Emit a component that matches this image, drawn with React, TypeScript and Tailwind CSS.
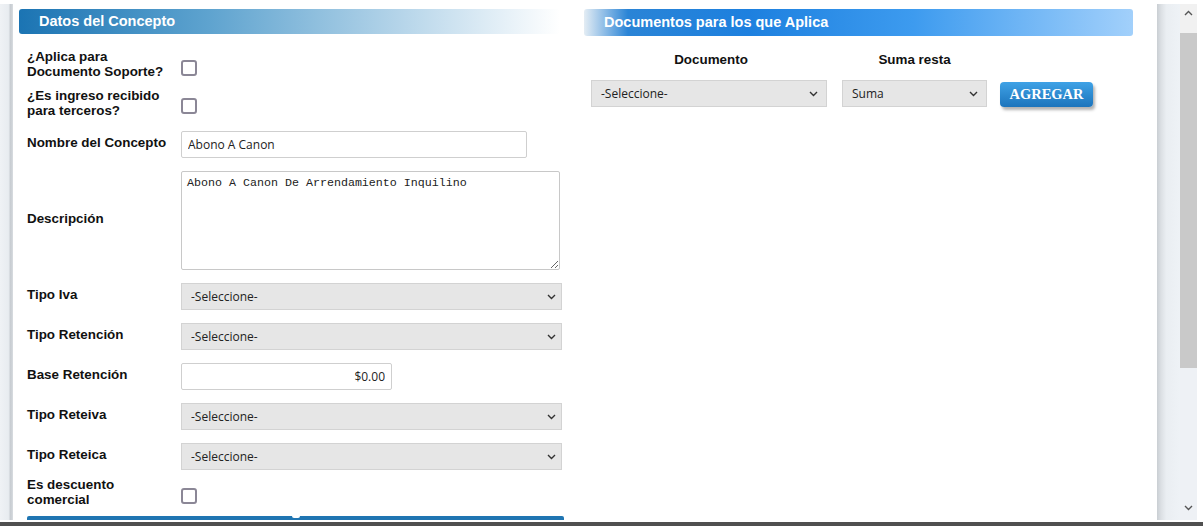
import React from "react";

const sans = "font-['Liberation_Sans',Arial,sans-serif]";
const ui = "font-['Open_Sans',Arial,sans-serif]";

function Chevron({ className = "" }: { className?: string }) {
  return (
    <svg width="9" height="6" viewBox="0 0 9 6" className={className}>
      <path d="M1 1l3.5 3.5L8 1" fill="none" stroke="currentColor" strokeWidth="1.4" />
    </svg>
  );
}

function Select({ value, className = "" }: { value: string; className?: string }) {
  return (
    <div
      className={`flex h-[27px] items-center justify-between border border-[#d3d3d3] bg-[#e6e6e6] pl-[9px] pr-[5px] text-[12px] text-[#222] ${ui} ${className}`}
    >
      <span>{value}</span>
      <Chevron className="text-[#333]" />
    </div>
  );
}

function Check() {
  return (
    <input
      type="checkbox"
      className="h-4 w-4 appearance-none rounded-[3px] border-2 border-[#8b8796] bg-white"
    />
  );
}

function Label({ children, className = "" }: { children: React.ReactNode; className?: string }) {
  return (
    <div className={`w-[154px] shrink-0 text-[13.4px] font-bold leading-[15px] text-[#111] ${className}`}>
      {children}
    </div>
  );
}

export default function App() {
  return (
    <div className={`flex h-[526px] w-[1203px] flex-col overflow-hidden bg-white ${sans}`}>
      <div className="h-[4px] shrink-0" />
      <div className="flex h-[516px] shrink-0">
        <div className="w-[13px] bg-[linear-gradient(to_right,#eff2f5_0%,#e8ecf0_65%,#c6cbd0_82%,#d9dde1_100%)]" />

        <main className="flex flex-1 overflow-hidden pl-[6px] pt-[5px]">
          {/* Datos del Concepto */}
          <section className="flex w-[545px] shrink-0 flex-col">
            <div className="flex h-[26px] w-[541px] items-center rounded-[3px] bg-[linear-gradient(to_right,#1b74b3_0%,#5ea3cf_35%,#b4d4e9_70%,#ffffff_100%)] pl-[20px] text-[14.5px] font-bold text-white">
              Datos del Concepto
            </div>

            <div className="ml-[8px] flex flex-col">
              <div className="mt-[15px] flex h-[30px]">
                <Label>
                  ¿Aplica para
                  <br />
                  Documento Soporte?
                </Label>
                <div className="mt-[10px]">
                  <Check />
                </div>
              </div>

              <div className="mt-[9px] flex h-[30px]">
                <Label>
                  ¿Es ingreso recibido
                  <br />
                  para terceros?
                </Label>
                <div className="mt-[9px]">
                  <Check />
                </div>
              </div>

              <div className="mt-[13px] flex h-[27px]">
                <Label className="pt-[4px]">Nombre del Concepto</Label>
                <input
                  readOnly
                  defaultValue="Abono A Canon"
                  className={`h-[27px] w-[346px] rounded-[2px] border border-[#cfcfcf] bg-white pl-[6px] text-[12px] text-[#222] outline-none ${ui}`}
                />
              </div>

              <div className="mt-[13px] flex h-[99px] items-center">
                <Label className="-mt-[5px]">Descripción</Label>
                <textarea
                  readOnly
                  defaultValue="Abono A Canon De Arrendamiento Inquilino"
                  className="h-[99px] w-[379px] resize rounded-[2px] border border-[#c8c8c8] bg-white px-[5px] pt-[4px] font-['Liberation_Mono',monospace] text-[11.67px] leading-[14px] text-[#222] outline-none"
                />
              </div>

              <div className="mt-[13px] flex h-[27px]">
                <Label className="pt-[4px]">Tipo Iva</Label>
                <Select value="-Seleccione-" className="w-[381px]" />
              </div>

              <div className="mt-[13px] flex h-[27px]">
                <Label className="pt-[4px]">Tipo Retención</Label>
                <Select value="-Seleccione-" className="w-[381px]" />
              </div>

              <div className="mt-[13px] flex h-[27px]">
                <Label className="pt-[4px]">Base Retención</Label>
                <input
                  readOnly
                  defaultValue="$0.00"
                  className={`h-[27px] w-[211px] rounded-[2px] border border-[#cfcfcf] bg-white pr-[6px] text-right text-[12px] text-[#222] outline-none ${ui}`}
                />
              </div>

              <div className="mt-[13px] flex h-[27px]">
                <Label className="pt-[4px]">Tipo Reteiva</Label>
                <Select value="-Seleccione-" className="w-[381px]" />
              </div>

              <div className="mt-[13px] flex h-[27px]">
                <Label className="pt-[4px]">Tipo Reteica</Label>
                <Select value="-Seleccione-" className="w-[381px]" />
              </div>

              <div className="mt-[7px] flex h-[30px]">
                <Label>
                  Es descuento
                  <br />
                  comercial
                </Label>
                <div className="mt-[10px]">
                  <Check />
                </div>
              </div>

              <div className="mt-[9px] flex h-[4px] w-[537px] justify-center rounded-t-[2px] bg-[#1f75b2]">
                <div className="-mt-[2px] h-[4px] w-[8px] rounded-full bg-white" />
              </div>
            </div>
          </section>

          {/* Documentos para los que Aplica */}
          <section className="ml-[20px] flex w-[549px] shrink-0 flex-col">
            <div className="flex h-[27px] items-center rounded-[3px] bg-[linear-gradient(to_right,#e4edf4_0%,#2a84d6_8%,#1d80df_30%,#3d9bef_60%,#a2d0fb_100%)] pl-[20px] text-[14.5px] font-bold text-white">
              Documentos para los que Aplica
            </div>

            <div className="flex flex-col pl-[7px]">
              <div className="mt-[16px] flex text-[13.4px] font-bold leading-[15px] text-[#111]">
                <div className="w-[236px] pl-[4px] text-center">Documento</div>
                <div className="ml-[15px] w-[145px] text-center">Suma resta</div>
              </div>

              <div className="mt-[13px] flex items-start">
                <Select value="-Seleccione-" className="w-[236px] pr-[8px]" />
                <Select value="Suma" className="ml-[15px] w-[145px] pr-[8px]" />
                <button className="ml-[13px] mt-[2px] h-[25px] w-[93px] rounded-[4px] bg-[linear-gradient(to_bottom,#3fa2e6,#1c74bc)] font-['Liberation_Serif',serif] text-[14.5px] font-bold text-white shadow-[2px_3px_3px_rgba(0,0,0,0.3)]">
                  AGREGAR
                </button>
              </div>
            </div>
          </section>
        </main>

        <div className="w-[23px] bg-[linear-gradient(to_right,#c9ced3_0%,#dce0e4_18%,#eaeef2_40%,#eef2f6_100%)]" />

        {/* scrollbar */}
        <div className="flex w-[17px] flex-col bg-[#eef1f5]">
          <div className="flex h-[29px] items-start justify-center bg-[#f1f1f1] pt-[6px] text-[#555]">
            <Chevron className="rotate-180" />
          </div>
          <div className="h-[335px] bg-[#c9c9c9]" />
          <div className="flex-1" />
          <div className="flex h-[24px] items-start justify-center pt-[9px] text-[#555]">
            <Chevron />
          </div>
        </div>
        <div className="w-[6px] bg-white" />
      </div>
      <div className="h-[2px] shrink-0 bg-white" />
      <div className="h-[4px] shrink-0 bg-[#505050]" />
    </div>
  );
}
